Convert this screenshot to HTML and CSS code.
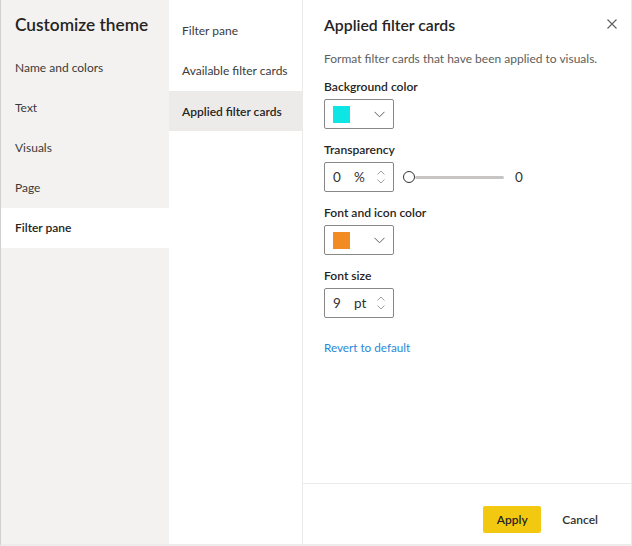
FILE: index.html
```html
<!DOCTYPE html>
<html>
<head>
<meta charset="utf-8">
<link rel="stylesheet" href="styles.css">
</head>
<body>
<div class="dialog">
  <nav class="nav-main">
    <h1 class="title">Customize theme</h1>
    <ul class="menu">
      <li class="menu-item">Name and colors</li>
      <li class="menu-item">Text</li>
      <li class="menu-item">Visuals</li>
      <li class="menu-item">Page</li>
      <li class="menu-item selected">Filter pane</li>
    </ul>
  </nav>
  <nav class="nav-sub">
    <ul class="submenu">
      <li class="sub-item">Filter pane</li>
      <li class="sub-item">Available filter cards</li>
      <li class="sub-item selected">Applied filter cards</li>
    </ul>
  </nav>
  <section class="panel">
    <div class="panel-body">
      <div class="panel-head">
        <h2 class="panel-title">Applied filter cards</h2>
        <svg class="close" width="10" height="10" viewBox="0 0 10 10"><path d="M0.5 0.5L9.5 9.5M9.5 0.5L0.5 9.5" stroke="#605e5c" stroke-width="1.1" fill="none"/></svg>
      </div>
      <p class="desc">Format filter cards that have been applied to visuals.</p>

      <div class="field">
        <label class="label">Background color</label>
        <div class="box color-box">
          <span class="swatch cyan"></span>
          <svg class="chev" width="11" height="7" viewBox="0 0 11 7"><path d="M0.5 0.8L5.5 5.8L10.5 0.8" stroke="#605e5c" stroke-width="1" fill="none"/></svg>
        </div>
      </div>

      <div class="field">
        <label class="label">Transparency</label>
        <div class="row">
          <div class="box spin">
            <span class="val">0</span>
            <span class="unit">%</span>
            <span class="arrows">
              <svg width="8" height="5" viewBox="0 0 8 5"><path d="M0.5 4.5L4 1L7.5 4.5" stroke="#a19f9d" stroke-width="1" fill="none"/></svg>
              <svg width="8" height="5" viewBox="0 0 8 5"><path d="M0.5 0.5L4 4L7.5 0.5" stroke="#a19f9d" stroke-width="1" fill="none"/></svg>
            </span>
          </div>
          <div class="slider">
            <span class="thumb"></span>
            <span class="track"></span>
          </div>
          <span class="slider-val">0</span>
        </div>
      </div>

      <div class="field">
        <label class="label">Font and icon color</label>
        <div class="box color-box">
          <span class="swatch orange"></span>
          <svg class="chev" width="11" height="7" viewBox="0 0 11 7"><path d="M0.5 0.8L5.5 5.8L10.5 0.8" stroke="#605e5c" stroke-width="1" fill="none"/></svg>
        </div>
      </div>

      <div class="field">
        <label class="label">Font size</label>
        <div class="box spin">
          <span class="val">9</span>
          <span class="unit">pt</span>
          <span class="arrows">
            <svg width="8" height="5" viewBox="0 0 8 5"><path d="M0.5 4.5L4 1L7.5 4.5" stroke="#a19f9d" stroke-width="1" fill="none"/></svg>
            <svg width="8" height="5" viewBox="0 0 8 5"><path d="M0.5 0.5L4 4L7.5 0.5" stroke="#a19f9d" stroke-width="1" fill="none"/></svg>
          </span>
        </div>
      </div>

      <a class="revert">Revert to default</a>
    </div>
    <footer class="footer">
      <button class="btn primary">Apply</button>
      <button class="btn plain">Cancel</button>
    </footer>
  </section>
</div>
</body>
</html>
```
FILE: styles.css
```css
* { box-sizing: border-box; }
html, body { margin: 0; padding: 0; background: #ffffff; }
body {
  width: 632px;
  height: 546px;
  font-family: "Lato", "Noto Sans", sans-serif;
  color: #323130;
  overflow: hidden;
}
ul { list-style: none; margin: 0; padding: 0; }
h1, h2, p { margin: 0; }

.dialog {
  display: flex;
  width: 632px;
  height: 546px;
  border-left: 1px solid #d2d0ce;
  border-bottom: 2px solid #edebe9;
  border-right: 1px solid #edebe9;
}

.nav-main {
  width: 168px;
  background: #f3f2f1;
  padding-top: 12px;
}
.title {
  font-size: 17.3px;
  font-weight: 600;
  color: #252423;
  padding-left: 14px;
  height: 36px;
  line-height: 25px;
}
.menu-item {
  height: 40px;
  line-height: 40px;
  padding-left: 14px;
  font-size: 12px;
  color: #3b3a39;
}
.menu-item.selected {
  background: #ffffff;
  font-weight: 600;
  color: #252423;
}

.nav-sub {
  width: 134px;
  background: #ffffff;
  border-right: 1px solid #edebe9;
  padding-top: 10px;
}
.sub-item {
  height: 40.3px;
  line-height: 41px;
  padding-left: 13px;
  font-size: 12px;
  color: #3b3a39;
}
.sub-item.selected {
  background: #edebe9;
  font-weight: 600;
  color: #252423;
}

.panel {
  flex: 1;
  display: flex;
  flex-direction: column;
}
.panel-body {
  flex: 1;
  padding: 12px 0 0 21px;
}
.panel-head {
  display: flex;
  align-items: center;
  justify-content: space-between;
  padding-right: 14px;
  height: 24px;
}
.panel-title {
  font-size: 15.8px;
  font-weight: 600;
  color: #252423;
}
.close { display: block; }
.desc {
  margin-top: 15px;
  font-size: 12px;
  color: #605e5c;
  line-height: 15px;
}
.field { margin-top: 12px; }
.label {
  display: block;
  font-size: 12.1px;
  font-weight: 600;
  color: #252423;
  line-height: 18px;
  margin-bottom: 3px;
}
.box {
  width: 70px;
  height: 30px;
  border: 1px solid #8a8886;
  border-radius: 2px;
  display: flex;
  align-items: center;
}
.color-box {
  padding: 0 8px 0 8px;
  justify-content: space-between;
}
.swatch { width: 17px; height: 17px; display: block; }
.cyan { background: #0ee6e6; }
.orange { background: #f28c22; }
.chev { display: block; }

.row { display: flex; align-items: center; }
.spin {
  padding-left: 8px;
  font-size: 13.5px;
  color: #323130;
}
.val { width: 21px; }
.unit { width: 23px; }
.arrows {
  display: flex;
  flex-direction: column;
  gap: 4px;
}
.arrows svg { display: block; }

.slider {
  display: flex;
  align-items: center;
  margin-left: 9px;
  width: 101px;
}
.thumb {
  width: 12px;
  height: 12px;
  border: 1.5px solid #323130;
  border-radius: 50%;
  background: #fff;
  flex: none;
}
.track {
  flex: 1;
  height: 3px;
  background: #c8c6c4;
  border-radius: 2px;
}
.slider-val {
  margin-left: 11px;
  font-size: 13.5px;
  color: #323130;
}

.revert {
  display: block;
  margin-top: 22px;
  font-size: 11.7px;
  color: #2b88d8;
}

.footer {
  height: 61px;
  border-top: 1px solid #edebe9;
  display: flex;
  align-items: flex-start;
  justify-content: flex-end;
  padding: 22px 33px 0 0;
  gap: 21px;
}
.btn {
  font-family: inherit;
  font-size: 12px;
  font-weight: 600;
  border: none;
  cursor: pointer;
}
.btn.primary {
  background: #f2c811;
  color: #252423;
  width: 58px;
  height: 27px;
  border-radius: 2px;
}
.btn.plain {
  background: none;
  color: #323130;
  padding: 0;
  height: 27px;
}
```
